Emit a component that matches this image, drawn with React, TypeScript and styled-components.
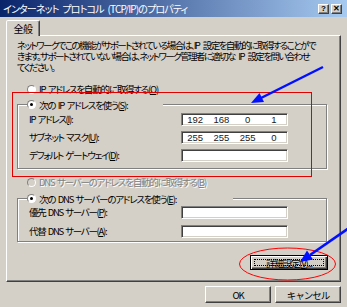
import React from "react";
import styled, { createGlobalStyle } from "styled-components";

const FONT = `"Noto Sans CJK JP", "Liberation Sans", sans-serif`;

const GlobalStyle = createGlobalStyle`
  html, body { margin: 0; padding: 0; background: #d4d0c8; }
  body {
    font-family: ${FONT};
    font-size: 9.5px;
    color: #000;
    font-feature-settings: "palt";
    word-spacing: 1.5px;
  }
  *, *::before, *::after { box-sizing: border-box; }
`;

const Dialog = styled.div`
  position: relative;
  width: 347px;
  height: 307px;
  overflow: hidden;
  background: #d4d0c8;
  display: flex;
  flex-direction: column;
`;

const TitleBar = styled.div`
  height: 17px;
  flex: none;
  display: flex;
  align-items: center;
  justify-content: space-between;
  padding: 0 5px 0 3px;
  background: linear-gradient(to right, #0a246a, #a6caf0);
  color: #fff;
`;

const Title = styled.span`
  font-size: 10px;
  line-height: 17px;
  white-space: nowrap;
  letter-spacing: -0.85px;
  word-spacing: 2.5px;
`;

const TitleButtons = styled.div`
  display: flex;
  gap: 2px;
`;

const TitleButton = styled.div`
  width: 11px;
  height: 10px;
  background: #d4d0c8;
  border: 1px solid;
  border-color: #fff #404040 #404040 #fff;
  box-shadow: inset -1px -1px 0 #808080;
  display: flex;
  align-items: center;
  justify-content: center;
  font: bold 8px "Liberation Sans", sans-serif;
  color: #000;
  line-height: 1;
`;

const Body = styled.div`
  flex: 1;
  display: flex;
  flex-direction: column;
  padding: 3px 6px 0;
`;

const TabStrip = styled.div`
  display: flex;
  height: 15px;
`;

const Tab = styled.div`
  position: relative;
  z-index: 1;
  width: 34px;
  height: 16px;
  background: #d4d0c8;
  border: 1px solid;
  border-bottom: none;
  border-color: #fff #404040 transparent #fff;
  border-radius: 2px 2px 0 0;
  box-shadow: inset -1px 0 0 #808080;
  display: flex;
  align-items: center;
  justify-content: center;
  font-size: 10px;
  letter-spacing: -0.5px;
`;

const Panel = styled.div`
  height: 247px;
  flex: none;
  border: 1px solid;
  border-color: #fff #404040 #404040 #fff;
  box-shadow: inset -1px -1px 0 #808080;
  padding: 4px 13px 0 10px;
  display: flex;
  flex-direction: column;
`;

const Description = styled.p`
  margin: 0;
  line-height: 11px;
  white-space: nowrap;
  letter-spacing: -1.6px;
  word-spacing: 3px;
`;

const RadioRow = styled.div<{ $top: number }>`
  height: 12px;
  margin-top: ${(p) => p.$top}px;
  padding-left: 10px;
  display: flex;
  align-items: center;
  gap: 3px;
`;

const Radio = styled.span<{ $checked?: boolean; $disabled?: boolean }>`
  position: relative;
  flex: none;
  width: 9px;
  height: 9px;
  border-radius: 50%;
  border: 1px solid;
  border-color: #808080 #fff #fff #808080;
  background: ${(p) => (p.$disabled ? "#d4d0c8" : "#fff")};
  &::after {
    content: "";
    display: ${(p) => (p.$checked ? "block" : "none")};
    position: absolute;
    left: 2px;
    top: 2px;
    width: 3px;
    height: 3px;
    border-radius: 50%;
    background: #000;
  }
`;

const RadioLabel = styled.span<{ $disabled?: boolean }>`
  white-space: nowrap;
  line-height: 12px;
  letter-spacing: -1.2px;
  color: ${(p) => (p.$disabled ? "#808080" : "#000")};
  text-shadow: ${(p) => (p.$disabled ? "1px 1px 0 #fff" : "none")};
`;

const Group = styled.fieldset<{ $top: number; $padTop: number; $padBottom: number }>`
  margin: ${(p) => p.$top}px 0 0;
  padding: ${(p) => p.$padTop}px 0 ${(p) => p.$padBottom}px 11px;
  min-width: 0;
  border: 1px solid #808080;
  box-shadow: inset 1px 1px 0 #fff, 1px 1px 0 #fff;
`;

const Legend = styled.legend<{ $w: number }>`
  width: ${(p) => p.$w}px;
  height: 13px;
  padding: 0;
  margin-left: -2px;
  display: flex;
  align-items: center;
  gap: 3px;
  background: #d4d0c8;
`;

const FieldGrid = styled.div<{ $gap: number }>`
  display: grid;
  grid-template-columns: 152px 107px;
  grid-auto-rows: 13px;
  row-gap: ${(p) => p.$gap}px;
  align-items: center;
`;

const Label = styled.span`
  white-space: nowrap;
  line-height: 13px;
  letter-spacing: -1.3px;
`;

const Field = styled.div`
  width: 107px;
  height: 13px;
  background: #fff;
  border: 1px solid;
  border-color: #808080 #fff #fff #808080;
  box-shadow: inset 1px 1px 0 #404040, inset -1px -1px 0 #d4d0c8;
  display: grid;
  grid-template-columns: repeat(4, 1fr);
  align-items: center;
  text-align: center;
  font-family: "Liberation Sans", sans-serif;
  font-size: 9.5px;
  line-height: 11px;
  word-spacing: 0;
  color: #202020;
`;

const ActionRow = styled.div`
  display: flex;
  justify-content: flex-end;
  margin: 13px -1px 0 0;
`;

const Button = styled.button<{ $w: number; $h: number }>`
  width: ${(p) => p.$w}px;
  height: ${(p) => p.$h}px;
  padding: 0;
  margin: 0;
  font-family: inherit;
  font-size: 9.5px;
  letter-spacing: -1px;
  color: #000;
  background: #d4d0c8;
  border: 1px solid;
  border-color: #fff #404040 #404040 #fff;
  box-shadow: inset -1px -1px 0 #808080;
  display: flex;
  align-items: center;
  justify-content: center;
`;

const DefaultButton = styled(Button)`
  border-color: #000;
  box-shadow: inset 1px 1px 0 #fff, inset -1px -1px 0 #404040, inset -2px -2px 0 #808080;
  padding: 3px;
  letter-spacing: -1.2px;
`;

const FocusRing = styled.span`
  flex: 1;
  align-self: stretch;
  display: flex;
  align-items: center;
  justify-content: center;
  border: 1px dotted #000;
`;

const Footer = styled.div`
  display: flex;
  justify-content: flex-end;
  gap: 4px;
  padding-top: 4px;
`;

const Overlay = styled.svg`
  position: absolute;
  left: 0;
  top: 0;
  pointer-events: none;
`;

export default function App() {
  return (
    <>
      <GlobalStyle />
      <Dialog>
        <TitleBar>
          <Title>インターネット プロトコル (TCP/IP)のプロパティ</Title>
          <TitleButtons>
            <TitleButton>?</TitleButton>
            <TitleButton>✕</TitleButton>
          </TitleButtons>
        </TitleBar>
        <Body>
          <TabStrip>
            <Tab>全般</Tab>
          </TabStrip>
          <Panel>
            <Description>
              ネットワークでこの機能がサポートされている場合は、IP 設定を自動的に取得することがで
              <br />
              きます。サポートされていない場合は、ネットワーク管理者に適切な IP 設定を問い合わせ
              <br />
              てください。
            </Description>

            <RadioRow $top={10}>
              <Radio />
              <RadioLabel>
                IP アドレスを自動的に取得する(<u>O</u>)
              </RadioLabel>
            </RadioRow>

            <Group $top={3} $padTop={2} $padBottom={6}>
              <Legend $w={136}>
                <Radio $checked />
                <RadioLabel>
                  次の IP アドレスを使う(<u>S</u>):
                </RadioLabel>
              </Legend>
              <FieldGrid $gap={5}>
                <Label>
                  IP アドレス(<u>I</u>):
                </Label>
                <Field>
                  <span>192</span>
                  <span>168</span>
                  <span>0</span>
                  <span>1</span>
                </Field>
                <Label>
                  サブネット マスク(<u>U</u>):
                </Label>
                <Field>
                  <span>255</span>
                  <span>255</span>
                  <span>255</span>
                  <span>0</span>
                </Field>
                <Label>
                  デフォルト ゲートウェイ(<u>D</u>):
                </Label>
                <Field />
              </FieldGrid>
            </Group>

            <RadioRow $top={7}>
              <Radio $disabled />
              <RadioLabel $disabled>
                DNS サーバーのアドレスを自動的に取得する(<u>B</u>)
              </RadioLabel>
            </RadioRow>

            <Group $top={4} $padTop={1} $padBottom={3}>
              <Legend $w={206}>
                <Radio $checked />
                <RadioLabel>
                  次の DNS サーバーのアドレスを使う(<u>E</u>):
                </RadioLabel>
              </Legend>
              <FieldGrid $gap={6}>
                <Label>
                  優先 DNS サーバー(<u>P</u>):
                </Label>
                <Field />
                <Label>
                  代替 DNS サーバー(<u>A</u>):
                </Label>
                <Field />
              </FieldGrid>
            </Group>

            <ActionRow>
              <DefaultButton $w={78} $h={15}>
                <FocusRing>
                  詳細設定(<u>V</u>)...
                </FocusRing>
              </DefaultButton>
            </ActionRow>
          </Panel>
          <Footer>
            <Button $w={66} $h={17}>OK</Button>
            <Button $w={66} $h={17}>キャンセル</Button>
          </Footer>
        </Body>

        <Overlay width="347" height="307" viewBox="0 0 347 307">
          <rect x="12.5" y="92.5" width="299" height="84" fill="none" stroke="#e00000" strokeWidth="1" />
          <ellipse cx="287.5" cy="264" rx="48" ry="16" fill="none" stroke="#ff0000" strokeWidth="1" />
          <line x1="323" y1="67" x2="261" y2="98" stroke="#0010ff" strokeWidth="2.5" />
          <polygon points="251,103 264,102 259.5,93" fill="#0010ff" />
          <line x1="349" y1="228" x2="310" y2="255" stroke="#0010ff" strokeWidth="2.5" />
          <polygon points="300,262 313,259.5 307,250.5" fill="#0010ff" />
        </Overlay>
      </Dialog>
    </>
  );
}
